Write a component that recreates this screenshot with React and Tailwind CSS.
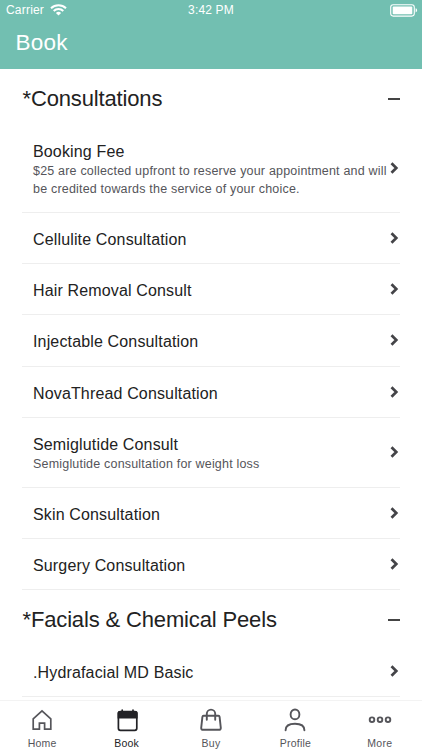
const sections = [
  {
    title: "*Consultations",
    items: [
      {
        name: "Booking Fee",
        lines: [
          "$25 are collected upfront to reserve your appointment and will",
          "be credited towards the service of your choice.",
        ],
      },
      { name: "Cellulite Consultation" },
      { name: "Hair Removal Consult" },
      { name: "Injectable Consultation" },
      { name: "NovaThread Consultation" },
      {
        name: "Semiglutide Consult",
        lines: ["Semiglutide consultation for weight loss"],
      },
      { name: "Skin Consultation" },
      { name: "Surgery Consultation" },
    ],
  },
  {
    title: "*Facials & Chemical Peels",
    items: [{ name: ".Hydrafacial MD Basic" }],
  },
];

const iconProps = {
  width: 24,
  height: 24,
  viewBox: "0 0 24 24",
  fill: "none",
  stroke: "currentColor",
  strokeWidth: 1.7,
};

function HomeIcon() {
  return (
    <svg {...iconProps}>
      <path d="M3.2 10.8 12 2.8l8.8 8v10.4h-6.200v-6H9.400v6H3.200z" />
    </svg>
  );
}

function BookIcon() {
  return (
    <svg {...iconProps}>
      <rect x="3.4" y="3.6" width="18.400" height="18.700" rx="2" />
      <path d="M2.6 10.4V5a2 2 0 0 1 2-2h16a2 2 0 0 1 2 2v5.400z" fill="currentColor" stroke="none" />
      <path d="M7.200 2.200v3M18 2.200v3" strokeLinecap="round" />
    </svg>
  );
}

function BuyIcon() {
  return (
    <svg {...iconProps} strokeWidth={1.9} strokeLinecap="round">
      <path d="M4.600 7.700h14.800c.7 0 1.100.4 1.200 1.100l1.200 11c.1 1.200-.6 2-1.800 2H4c-1.200 0-1.900-.8-1.800-2L3.400 8.800c.1-.7.500-1.100 1.200-1.100z" />
      <path d="M7.800 11.700V5.800a4.200 4.200 0 0 1 8.400 0v5.900" />
    </svg>
  );
}

function ProfileIcon() {
  return (
    <svg {...iconProps} strokeWidth={1.9} strokeLinecap="round">
      <ellipse cx="12" cy="6.400" rx="4.400" ry="4.900" />
      <path d="M2.600 22.300c0-4 3.200-6.500 9.400-6.500s9.400 2.500 9.400 6.500" />
    </svg>
  );
}

function MoreIcon() {
  return (
    <svg {...iconProps} strokeWidth={1.9}>
      <circle cx="4" cy="11.700" r="2.300" />
      <circle cx="12" cy="11.700" r="2.300" />
      <circle cx="20" cy="11.700" r="2.300" />
    </svg>
  );
}

const tabs = [
  { label: "Home", Icon: HomeIcon },
  { label: "Book", Icon: BookIcon, active: true },
  { label: "Buy", Icon: BuyIcon },
  { label: "Profile", Icon: ProfileIcon },
  { label: "More", Icon: MoreIcon },
];

function StatusBar() {
  return (
    <div className="grid h-5 grid-cols-3 items-center pr-1 pl-[6px] text-[12px] leading-5">
      <div className="flex items-center gap-[6px]">
        <span className="tracking-[0.2px]">Carrier</span>
        <svg width="17" height="12" viewBox="0 0 17 12" fill="none" stroke="white" strokeWidth="2">
          <path d="M1 4.300a10.800 10.800 0 0 1 15 0" />
          <path d="M3.700 7a7 7 0 0 1 9.600 0" />
          <path d="M8.500 11.600 5.900 9a3.800 3.800 0 0 1 5.200 0z" fill="white" stroke="none" />
        </svg>
      </div>
      <span className="pr-[2px] text-center leading-[18px] tracking-[0.15px]">3:42 PM</span>
      <svg className="justify-self-end" width="28" height="13" viewBox="0 0 28 13">
        <rect x="0.700" y="0.700" width="23.600" height="11.400" rx="2.500" fill="none" stroke="white" strokeWidth="1.100" />
        <rect x="2.700" y="2.600" width="19.600" height="7.600" rx="0.800" fill="white" />
        <path d="M25.600 4.300c2 .7 2 3.500 0 4.200z" fill="white" />
      </svg>
    </div>
  );
}

function Row({ name, lines = [] }) {
  return (
    <li className="flex items-center border-b border-[#eeeeee] pt-[17px] pb-[13.300px] pl-[11px]">
      <div className="min-w-0 flex-1">
        <h3 className="text-[16px] leading-5 tracking-[0.150px] whitespace-nowrap text-[#222222]">{name}</h3>
        {lines.map((line) => (
          <p key={line} className="text-[12.500px] leading-[18.300px] tracking-[0.190px] whitespace-nowrap text-[#55555a]">
            {line}
          </p>
        ))}
      </div>
      <svg className="mr-[1px] mb-[4px] shrink-0" width="9" height="12" viewBox="0 0 9 12" fill="none" stroke="#444448" strokeWidth="2.700">
        <path d="m1.500 1.200 4.800 4.800-4.800 4.800" />
      </svg>
    </li>
  );
}

export default function App() {
  return (
    <div className="flex h-[750px] w-[422px] flex-col overflow-hidden bg-white font-['Liberation_Sans',Arial,sans-serif]">
      <header className="h-[69px] shrink-0 bg-[#72bfb1] text-white">
        <StatusBar />
        <h1 className="pt-[9px] pl-[15.500px] text-[22.500px] leading-7 tracking-[0.200px]">Book</h1>
      </header>

      <main className="min-h-0 flex-1 overflow-hidden px-[22px] pt-[0.400px]">
        {sections.map((section) => (
          <section key={section.title}>
            <div className="flex h-[55.500px] items-center justify-between pt-1 pl-[0.500px]">
              <h2 className="text-[22px] leading-7 tracking-[-0.150px] whitespace-nowrap text-[#222222]">{section.title}</h2>
              <span className="h-[1.500px] w-3 bg-[#444444]" />
            </div>
            <ul>
              {section.items.map((item) => (
                <Row key={item.name} {...item} />
              ))}
            </ul>
          </section>
        ))}
      </main>

      <nav className="grid h-[50px] shrink-0 grid-cols-5 border-t border-[#f3f3f3]">
        {tabs.map(({ label, Icon, active }) => (
          <button
            key={label}
            className={`flex flex-col items-center pt-[6.500px] ${active ? "text-[#222226]" : "text-[#55555a]"}`}
          >
            <Icon />
            <span className="mt-[5px] text-[10.500px] leading-3 tracking-[0.250px]">{label}</span>
          </button>
        ))}
      </nav>
    </div>
  );
}
